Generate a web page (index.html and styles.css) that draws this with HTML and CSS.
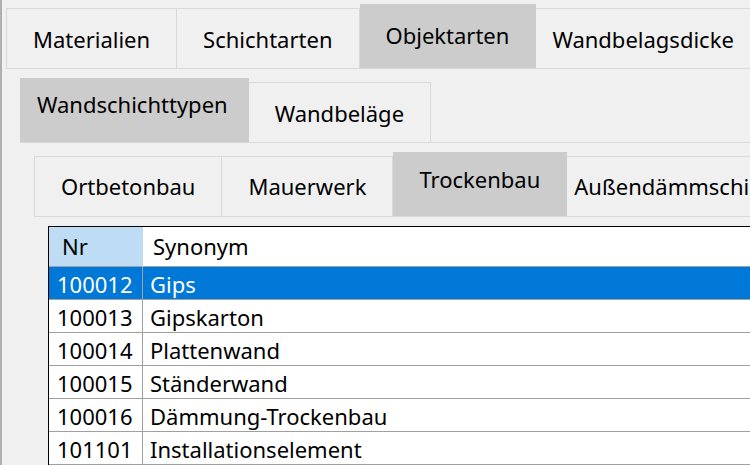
FILE: index.html
```html
<!DOCTYPE html>
<html lang="de">
<head>
  <meta charset="UTF-8" />
  <title>Objektarten</title>
  <link rel="stylesheet" href="styles.css">
</head>
<body>
  <div class="edge"></div>
  <div class="main">
    <div class="tabbar r1">
      <div class="tab">Materialien</div>
      <div class="tab">Schichtarten</div>
      <div class="tab sel">Objektarten</div>
      <div class="tab last">Wandbelagsdicke</div>
    </div>
    <div class="panel">
      <div class="tabbar r2">
        <div class="tab sel wide">Wandschichttypen</div>
        <div class="tab">Wandbeläge</div>
      </div>
      <div class="panel">
        <div class="tabbar r3">
          <div class="tab">Ortbetonbau</div>
          <div class="tab">Mauerwerk</div>
          <div class="tab sel">Trockenbau</div>
          <div class="tab cut">Außendämmschicht</div>
        </div>
        <div class="panel">
          <table class="grid">
            <colgroup>
              <col class="c1">
              <col>
            </colgroup>
            <thead>
              <tr>
                <th class="nr">Nr</th>
                <th>Synonym</th>
              </tr>
            </thead>
            <tbody>
              <tr class="selrow"><td class="nr">100012</td><td>Gips</td></tr>
              <tr><td class="nr">100013</td><td>Gipskarton</td></tr>
              <tr><td class="nr">100014</td><td>Plattenwand</td></tr>
              <tr><td class="nr">100015</td><td>Ständerwand</td></tr>
              <tr><td class="nr">100016</td><td>Dämmung-Trockenbau</td></tr>
              <tr><td class="nr">101101</td><td>Installationselement</td></tr>
            </tbody>
          </table>
        </div>
      </div>
    </div>
  </div>
</body>
</html>
```

FILE: styles.css
```css
body {
  margin: 0;
  height: 465px;
  overflow: hidden;
  display: flex;
  background: #f0f0f0;
  font-family: "Noto Sans", sans-serif;
  font-size: 22px;
  color: #000;
}
.edge {
  width: 2px;
  flex-shrink: 0;
  background: #b0b0b0;
}
.main {
  flex: 1;
  min-width: 0;
  padding: 4px 0 0 4px;
}
.tabbar {
  display: flex;
  align-items: flex-end;
  white-space: nowrap;
}
.tab {
  flex-shrink: 0;
  box-sizing: border-box;
  height: 60px;
  padding: 15px 26px 0;
  line-height: 30px;
  border: 1px solid #d9d9d9;
  border-bottom: none;
}
.tab + .tab {
  border-left: none;
}
.tab.sel {
  height: 64px;
  background: #cccccc;
  border-color: #cccccc;
}
.tab.last {
  padding-left: 16px;
}
.tab.wide {
  padding-left: 16px;
  padding-right: 20px;
}
.tab.cut {
  padding-left: 7px;
}
.r2 .sel {
  padding-top: 10px;
}
.r3 .tab {
  padding-top: 14px;
}
.r3 .sel {
  padding-top: 11px;
}
.panel {
  border-top: 1px solid #d9d9d9;
  padding: 9px 0 0 14px;
}
.grid {
  table-layout: fixed;
  width: 720px;
  border-collapse: separate;
  border-spacing: 0;
  border-top: 1px solid #000;
  border-left: 1px solid #000;
  background: #fff;
}
.c1 {
  width: 94px;
}
.grid th {
  font-weight: normal;
  text-align: left;
  line-height: 30px;
  padding: 4px 0 5px 10px;
  border-bottom: 1px solid #a0a0a0;
}
.grid th.nr {
  padding-left: 13px;
  background: #bedcf4;
  border-right: 1px solid #bedcf4;
}
.grid td {
  line-height: 30px;
  padding: 2px 0 0 7px;
  border-bottom: 1px solid #a0a0a0;
}
.grid td.nr {
  padding-left: 8px;
  border-right: 1px solid #a0a0a0;
}
.selrow td {
  background: #0078d7;
  color: #fff;
}
```
